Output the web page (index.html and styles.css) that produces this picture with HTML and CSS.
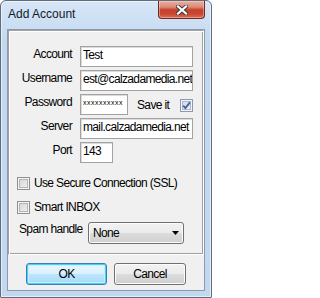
FILE: index.html
```html
<!DOCTYPE html>
<html>
<head>
<meta charset="utf-8">
<title>Add Account</title>
<link rel="stylesheet" href="styles.css">
</head>
<body>
<div class="window">
  <div class="titlebar">
    <span class="title">Add Account</span>
    <div class="close">
      <svg width="12" height="10" viewBox="0 0 12 10">
        <path d="M2 1.5 L10 8.5 M10 1.5 L2 8.5" stroke="#3b3b3b" stroke-width="4" stroke-linecap="square" fill="none"/>
        <path d="M2 1.5 L10 8.5 M10 1.5 L2 8.5" stroke="#ffffff" stroke-width="2.2" stroke-linecap="square" fill="none"/>
      </svg>
    </div>
  </div>
  <div class="client">
    <div class="group">
      <div class="form">
        <span class="lbl">Account</span>
        <div class="field wide">Test</div>
        <span class="lbl">Username</span>
        <div class="field wide">est@calzadamedia.net</div>
        <span class="lbl">Password</span>
        <div class="pw-cell">
          <div class="field pw"><span class="dots">xxxxxxxxxx</span></div>
          <span class="save">Save it</span>
          <span class="cb checked">
            <svg width="9" height="9" viewBox="0 0 9 9"><path d="M1.2 4.6 L3.4 7 L7.9 1.4" stroke="#4a5f95" stroke-width="1.8" fill="none"/></svg>
          </span>
        </div>
        <span class="lbl">Server</span>
        <div class="field wide">mail.calzadamedia.net</div>
        <span class="lbl">Port</span>
        <div class="field port">143</div>
      </div>
      <div class="check-row ssl"><span class="cb"></span><span class="cb-text">Use Secure Connection (SSL)</span></div>
      <div class="check-row inbox"><span class="cb"></span><span class="cb-text">Smart INBOX</span></div>
      <div class="spam-row">
        <span class="spam-label">Spam handle</span>
        <div class="select">
          <span class="sel-text">None</span>
          <svg class="arrow" width="7" height="4" viewBox="0 0 7 4"><path d="M0 0 H7 L3.5 4 Z" fill="#000"/></svg>
        </div>
      </div>
    </div>
    <div class="buttons">
      <div class="btn ok">OK</div>
      <div class="btn cancel">Cancel</div>
    </div>
  </div>
</div>
</body>
</html>
```
FILE: styles.css
```css
* { box-sizing: border-box; }
html, body { margin: 0; padding: 0; }
body {
  width: 212px;
  height: 298px;
  overflow: hidden;
  font-family: "Liberation Sans", Arial, sans-serif;
  font-size: 12px;
  letter-spacing: -0.65px;
  color: #000;
  background: #fff;
}
.window {
  width: 212px;
  height: 298px;
  border: 1px solid #5e6c7b;
  border-radius: 6px 6px 1px 1px;
  background: linear-gradient(#d7e6f7, #c4d9f0 40px, #c3d8ef);
  box-shadow: inset 0 0 0 1px rgba(255,255,255,0.55);
  display: flex;
  flex-direction: column;
}
.titlebar {
  height: 28px;
  display: flex;
  align-items: flex-start;
}
.title {
  font-family: "Liberation Sans", Arial, sans-serif;
  font-size: 12px;
  letter-spacing: 0;
  line-height: 14px;
  margin: 6px 0 0 7px;
  color: #0f1b2b;
}
.close {
  margin-left: auto;
  margin-right: 6px;
  width: 47px;
  height: 18px;
  border: 1px solid #6f2b20;
  border-top: none;
  border-radius: 0 0 4px 4px;
  background: linear-gradient(#eab0a2 0%, #dc8c78 35%, #c5412d 52%, #c94630 75%, #db6e52 100%);
  box-shadow: inset 0 0 0 1px rgba(255,214,204,0.45);
  display: flex;
  align-items: center;
  justify-content: center;
}
.close svg { display: block; }
.client {
  flex: 1;
  margin: 0 6px 6px;
  border: 1px solid #8a9bae;
  background: #f0f0f0;
  display: flex;
  flex-direction: column;
}
.group {
  height: 225px;
  border: 1px solid;
  border-color: #a0a0a0 #ffffff #ffffff #a0a0a0;
  box-shadow: inset 1px 1px 0 #ffffff, inset -1px -1px 0 #a0a0a0;
  display: flex;
  flex-direction: column;
}
.form {
  margin-top: 15px;
  display: grid;
  grid-template-columns: 63px 113px;
  column-gap: 8px;
  row-gap: 3px;
  grid-auto-rows: 21px;
}
.lbl {
  text-align: right;
  line-height: 17px;
  white-space: nowrap;
}
.field {
  height: 21px;
  border: 1px solid #a2a2a2;
  box-shadow: inset 1px 1px 0 #dcdcdc;
  background: #fff;
  line-height: 16px;
  padding: 0 0 0 2px;
  white-space: nowrap;
  overflow: hidden;
}
.wide { width: 113px; }
.port { width: 33px; }
.pw { width: 48px; flex: none; }
.dots {
  font-size: 7px;
  letter-spacing: 0.5px;
  vertical-align: 3px;
}
.pw-cell {
  display: flex;
  align-items: flex-start;
}
.save {
  margin: 4px 0 0 9px;
  line-height: 14px;
}
.cb {
  width: 13px;
  height: 13px;
  flex: none;
  border: 1px solid #8e8f8f;
  background: linear-gradient(135deg, #cfcfcf, #f7f7f7);
  box-shadow: inset 0 0 0 1px #f4f4f4, inset 0 0 0 2px #b5b5b5;
  display: flex;
  align-items: center;
  justify-content: center;
}
.cb.checked {
  margin: 5px 0 0 auto;
  border-color: #8d9aaa;
  background: linear-gradient(135deg, #c9d8ea, #f2f7fc);
  box-shadow: inset 0 0 0 1px #f2f6fa, inset 0 0 0 2px #a9b8cb;
}
.cb svg { display: block; }
.check-row {
  display: flex;
  align-items: center;
  height: 13px;
  padding-left: 8px;
}
.ssl { margin-top: 14px; }
.inbox { margin-top: 11px; }
.cb-text {
  margin-left: 4px;
  line-height: 13px;
  white-space: nowrap;
}
.spam-row {
  display: flex;
  align-items: flex-start;
  margin-top: 8px;
  padding-left: 10px;
}
.spam-label {
  width: 69px;
  line-height: 14px;
  white-space: nowrap;
}
.select {
  width: 96px;
  height: 22px;
  border: 1px solid #707070;
  border-radius: 3px;
  background: linear-gradient(#f2f2f2 0%, #ebebeb 50%, #dddddd 50%, #cfcfcf 100%);
  box-shadow: inset 0 0 0 1px #fcfcfc;
  display: flex;
  align-items: center;
  padding: 0 4px 0 4px;
}
.sel-text { flex: 1; }
.arrow { display: block; }
.buttons {
  flex: 1;
  display: flex;
  align-items: flex-start;
  gap: 7px;
  padding: 8px 0 0 18px;
}
.btn {
  height: 22px;
  border: 1px solid #707070;
  border-radius: 3px;
  background: linear-gradient(#f2f2f2 0%, #ebebeb 50%, #dddddd 50%, #cfcfcf 100%);
  box-shadow: inset 0 0 0 1px #fcfcfc;
  display: flex;
  align-items: center;
  justify-content: center;
  line-height: 14px;
}
.ok {
  width: 81px;
  border-color: #3c7fb1;
  background: linear-gradient(#eaf6fd 0%, #d9f0fc 50%, #bee6fd 50%, #a7d9f5 100%);
  box-shadow: inset 0 0 0 1px #48cff5, inset 0 0 0 2px #c9eefc;
}
.cancel { width: 72px; }
```
